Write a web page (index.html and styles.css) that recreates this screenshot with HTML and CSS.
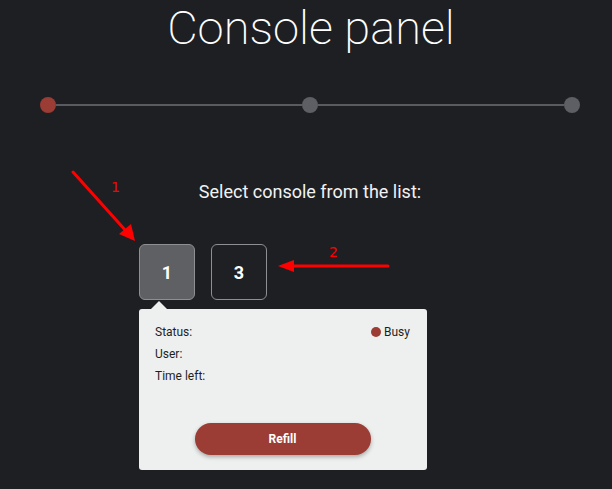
FILE: index.html
```html
<!DOCTYPE html>
<html lang="en">
<head>
    <meta charset="UTF-8">
    <title>Console panel</title>
    <link rel="stylesheet" href="styles.css">
</head>
<body>

<main class="page">
    <h1 class="title">Console panel</h1>

    <div class="stepper">
        <span class="step active"></span>
        <span class="step-line"></span>
        <span class="step"></span>
        <span class="step-line"></span>
        <span class="step"></span>
    </div>

    <p class="prompt">Select console from the list:</p>

    <div class="consoles">
        <div class="console-list">
            <button class="console selected">1</button>
            <button class="console">3</button>
        </div>

        <div class="popover">
            <div class="info-row">
                <span>Status:</span>
                <span class="status"><i class="status-dot"></i>Busy</span>
            </div>
            <div class="info-row"><span>User:</span></div>
            <div class="info-row"><span>Time left:</span></div>
            <button class="refill-btn">Refill</button>
        </div>
    </div>
</main>

<!-- annotation arrows drawn over the screenshot -->
<svg class="annotations" width="612" height="489" viewBox="0 0 612 489">
    <line x1="73" y1="172" x2="126" y2="231" stroke="#ff0000" stroke-width="3" stroke-linecap="round"/>
    <polygon points="135,241 119,234 131,224" fill="#ff0000"/>
    <text x="111" y="192" class="note">1</text>

    <line x1="388" y1="266" x2="290" y2="266" stroke="#ff0000" stroke-width="3" stroke-linecap="round"/>
    <polygon points="278,266 294,260 294,272" fill="#ff0000"/>
    <text x="329" y="257" class="note">2</text>
</svg>

</body>
</html>
```

FILE: styles.css
```css
* { margin: 0; padding: 0; box-sizing: border-box; }
body {
    font-family: Roboto, 'Liberation Sans', sans-serif;
    background: #1d1f23; color: #eee;
    width: 612px; height: 489px; overflow: hidden;
    position: relative;
}

.page { width: 540px; margin-left: 40px; padding-top: 1px; }

.title {
    font-size: 47px; font-weight: 200; line-height: 54px;
    text-align: center; color: #fff; padding-left: 2px;
}

/* stepper */
.stepper {
    display: flex; align-items: center;
    margin-top: 42px; height: 16px;
}
.step {
    width: 16px; height: 16px; border-radius: 50%;
    background: #5e5f64; flex: none;
}
.step.active { background: #9b3c35; }
.step-line { flex: 1; height: 2px; background: #5a5b60; }

.prompt {
    font-size: 18px; line-height: 24px; text-align: center;
    color: #f2f2f2; margin-top: 67px;
}

/* consoles */
.consoles { margin-left: 99px; margin-top: 40px; width: 288px; }
.console-list { display: flex; gap: 16px; }
.console {
    width: 56px; height: 56px; border-radius: 6px;
    border: 1px solid #8e8f92; background: #1e2024;
    color: #fff; font-family: inherit; font-size: 18px; font-weight: 700;
}
.console.selected { background: #5f6064; }

.popover {
    position: relative; margin-top: 9px;
    background: #eef0ef; border-radius: 3px;
    padding: 12px 17px 15px 16px; height: 161px;
    color: #1e1e1e; font-size: 12px;
    display: flex; flex-direction: column;
}
.popover::before {
    content: ''; position: absolute; top: -8px; left: 12px;
    border-left: 8px solid transparent; border-right: 8px solid transparent;
    border-bottom: 8px solid #eef0ef;
}
.info-row {
    display: flex; justify-content: space-between; align-items: center;
    line-height: 22px;
}
.status { display: flex; align-items: center; }
.status-dot {
    width: 10px; height: 10px; border-radius: 50%;
    background: #9b3c35; margin-right: 3px;
}
.refill-btn {
    margin: auto auto 0 auto;
    width: 176px; height: 32px; border: none; border-radius: 16px;
    background: #9b3c35; color: #fff;
    font-family: inherit; font-size: 12px; font-weight: 700;
    box-shadow: 0 2px 4px rgba(0,0,0,0.3);
}

.annotations { position: absolute; top: 0; left: 0; pointer-events: none; }
.note { fill: #ff0000; font-family: 'DejaVu Sans', sans-serif; font-size: 14px; }
```
